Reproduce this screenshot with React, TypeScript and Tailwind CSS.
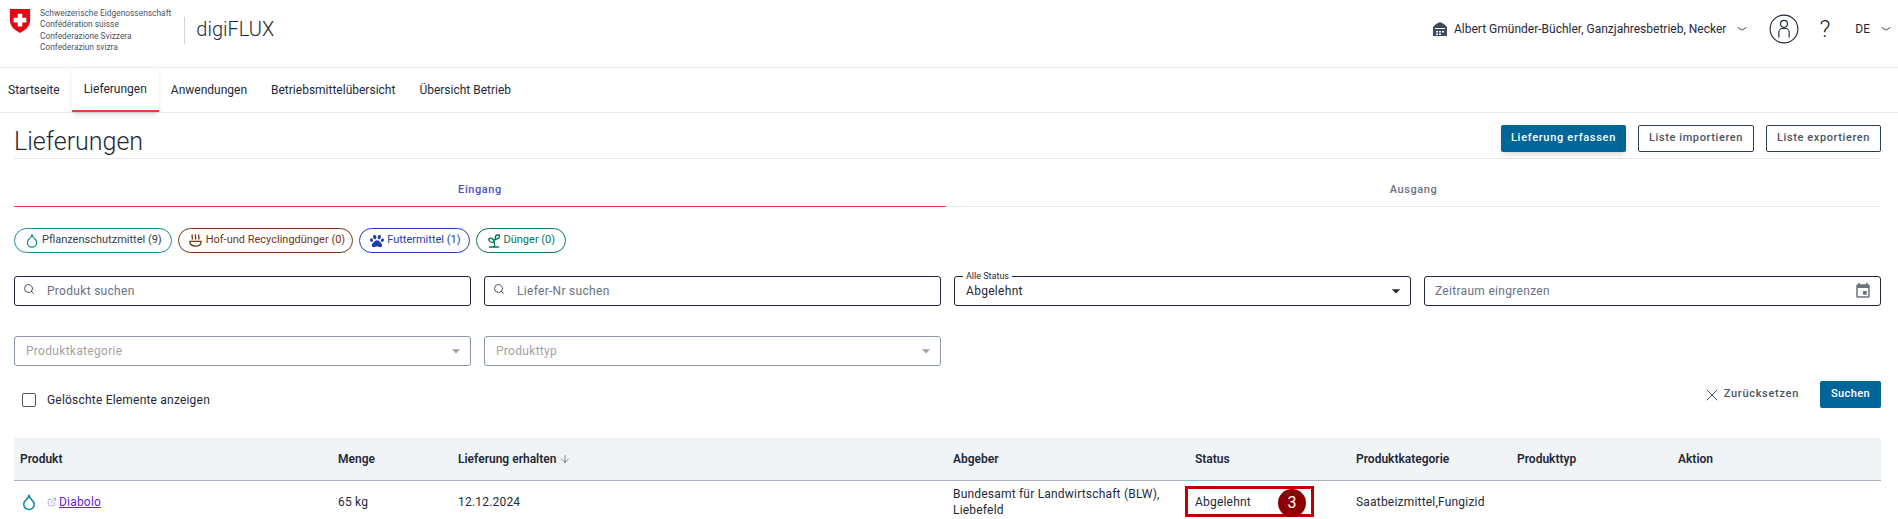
/**
 * digiFLUX deliveries page.
 */
import React from 'react';
import { Droplet, Search, Sprout, X, ArrowDown, ExternalLink } from 'lucide-react';
import { FaPaw } from 'react-icons/fa';
import { MdArrowDropDown, MdEvent } from 'react-icons/md';

const navItems = ['Startseite', 'Lieferungen', 'Anwendungen', 'Betriebsmittelübersicht', 'Übersicht Betrieb'];

const SwissShield = () => (
  <svg viewBox="0 0 24 28" className="mt-[3px] h-[26px] w-[22px] shrink-0">
    <path d="M1 1h22v12c0 7-5 11-11 14C6 24 1 20 1 13z" fill="#e30613" />
    <path d="M9.500 6h5v4.500H19v5h-4.500V20h-5v-4.500H5v-5h4.500z" fill="#fff" />
  </svg>
);

const FarmIcon = () => (
  <svg viewBox="0 0 16 16" className="h-4 w-4 text-[#3d4b5c]" fill="currentColor">
    <path d="M1 6l3-3 4-2 4 2 3 3v9H1z" />
    <path d="M3 7h10v1H3zM4 10h2v1.500H4zM7 10h2v1.500H7zM10 10h2v1.500h-2zM4 12.500h2V14H4zM7 12.500h2V14H7z" fill="#fff" />
  </svg>
);

const UserCircle = () => (
  <svg viewBox="0 0 32 32" className="h-[30px] w-[30px] text-[#1f2937]" fill="none" stroke="currentColor" strokeWidth="1.2">
    <circle cx="16" cy="16" r="14.800" />
    <circle cx="16" cy="10.500" r="3.700" />
    <path d="M10.500 25v-5.500a4 4 0 0 1 4-4h3a4 4 0 0 1 4 4V25" />
  </svg>
);

const FlatChevron = ({ className }: { className: string }) => (
  <svg viewBox="0 0 12 6" className={`h-[6px] w-[12px] text-[#4b5563] ${className}`} fill="none" stroke="currentColor" strokeWidth="1">
    <path d="M1.500 1.500L6 4l4.500-2.500" />
  </svg>
);

const ManureIcon = () => (
  <svg viewBox="0 0 16 16" className="h-[15px] w-[15px]" fill="none" stroke="currentColor" strokeWidth="1.4" strokeLinecap="round">
    <path d="M4.500 2c-1 1.500 1 2.500 0 4.500M8 2c-1 1.500 1 2.500 0 4.500M11.500 2c-1 1.500 1 2.500 0 4.500" />
    <path d="M2 9h12c0 3-2 5-6 5s-6-2-6-5z" />
  </svg>
);

const chips = [
  { label: 'Pflanzenschutzmittel (9)', icon: <Droplet className="-my-px h-[17px] w-[16px] text-[#0f8a94]" strokeWidth={1.8} />, cls: 'border-[#1b8f99] pr-[9px] text-[#2f3e50]' },
  { label: 'Hof-und Recyclingdünger (0)', icon: <span className="flex w-[16px] justify-center"><ManureIcon /></span>, cls: 'border-[#78350f] pr-[7px] text-[#78350f]' },
  { label: 'Futtermittel (1)', icon: <span className="flex w-[16px] justify-center"><FaPaw className="h-[14px] w-[14px]" /></span>, cls: 'border-[#1e40af] pr-[8px] text-[#1e40af]' },
  { label: 'Dünger (0)', icon: <Sprout className="h-4 w-4" strokeWidth={2} />, cls: 'border-[#047857] pr-[10px] text-[#047857]' },
];

const columns = ['Produkt', 'Menge', 'Lieferung erhalten', 'Abgeber', 'Status', 'Produktkategorie', 'Produkttyp', 'Aktion'];

const SearchField = ({ placeholder }: { placeholder: string }) => (
  <div className="flex h-[30px] items-center rounded-[3px] border border-[#1f2937] pl-[8px]">
    <Search className="-mt-[4px] h-3 w-3 text-[#4b5563]" strokeWidth={2} />
    <span className="ml-[12px] text-[12px] tracking-[0.3px] text-[#6b7280]">{placeholder}</span>
  </div>
);

const DisabledSelect = ({ placeholder }: { placeholder: string }) => (
  <div className="flex h-[30px] items-center justify-between rounded-[3px] border border-[#8d99a8] pl-[11px] pr-[4px]">
    <span className="text-[12px] tracking-[0.3px] text-[#a3a3a3]">{placeholder}</span>
    <MdArrowDropDown className="h-5 w-5 text-[#a3a3a3]" />
  </div>
);

export default function App() {
  return (
    <div className="h-[519px] overflow-hidden bg-white font-['Roboto',sans-serif] text-[12px] text-[#1f2937]">
      <header className="flex h-[68px] items-center justify-between border-b border-[#e2e8f0] pb-[9px] pl-[9px] pr-[6px]">
        <div className="flex items-center">
          <div className="flex gap-[9px]">
            <SwissShield />
            <div className="mt-[3px] text-[8.4px] leading-[11.3px] text-[#4b5563]">
              <div>Schweizerische Eidgenossenschaft</div>
              <div>Confédération suisse</div>
              <div>Confederazione Svizzera</div>
              <div>Confederaziun svizra</div>
            </div>
          </div>
          <div className="ml-[13px] mt-[3px] h-[27px] w-px bg-[#d1d5db]" />
          <span className="ml-[11px] text-[20px] font-light text-[#1f2937]">digiFLUX</span>
        </div>
        <div className="flex items-center">
          <FarmIcon />
          <span className="ml-[6px] text-[12px]">Albert Gmünder-Büchler, Ganzjahresbetrieb, Necker</span>
          <FlatChevron className="ml-[10px]" />
          <div className="ml-[21px]">
            <UserCircle />
          </div>
          <span className="ml-[20px] text-[24px] font-light leading-none">?</span>
          <span className="ml-[25px] text-[12px]">DE</span>
          <FlatChevron className="ml-[10px]" />
        </div>
      </header>

      <nav className="flex h-[45px] items-stretch border-b border-[#e2e8f0]">
        {navItems.map((item) => (
          <div
            key={item}
            className={
              item === 'Lieferungen'
                ? 'flex items-center border-b-2 border-[#e53e3e] px-[12px] shadow-md'
                : 'flex items-center px-[12px] pb-[1px] first:pl-[8px]'
            }
          >
            {item}
          </div>
        ))}
      </nav>

      <main className="px-[14px] pr-[17px]">
        <div className="flex h-[46px] items-start justify-between border-b border-[#e2e8f0] pt-[12px]">
          <h1 className="mt-[4px] text-[25px] font-light leading-[25px]">Lieferungen</h1>
          <div className="flex gap-[12px]">
            <button className="h-[27px] w-[125px] rounded-[2px] bg-[#006699] text-[11px] font-medium tracking-[0.7px] text-white shadow-md">Lieferung erfassen</button>
            <button className="h-[27px] w-[116px] rounded-[2px] border border-[#2f3e50] text-[11px] font-medium tracking-[0.6px] text-[#4b5563]">Liste importieren</button>
            <button className="h-[27px] w-[115px] rounded-[2px] border border-[#2f3e50] text-[11px] font-medium tracking-[0.6px] text-[#4b5563]">Liste exportieren</button>
          </div>
        </div>

        <div className="grid h-[48px] grid-cols-[932px_1fr] text-[11px] font-medium tracking-[0.6px]">
          <div className="flex items-center justify-center border-b border-[#e53e3e] pt-[16px] text-[#4c51bf]">Eingang</div>
          <div className="flex items-center justify-center border-b border-[#e2e8f0] pt-[16px] text-[#6b7280]">Ausgang</div>
        </div>

        <div className="mt-[21px] flex gap-[6px]">
          {chips.map((c) => (
            <div key={c.label} className={`flex h-[25px] items-center gap-[2px] rounded-full border pl-[9px] text-[11px] ${c.cls}`}>
              {c.icon}
              {c.label}
            </div>
          ))}
        </div>

        <div className="mt-[23px] grid grid-cols-4 gap-x-[13px] gap-y-[30px]">
          <SearchField placeholder="Produkt suchen" />
          <SearchField placeholder="Liefer-Nr suchen" />
          <div className="relative flex h-[30px] items-center justify-between rounded-[3px] border border-[#1f2937] pl-[11px] pr-[4px]">
            <span className="absolute -top-[6px] left-[8px] bg-white px-[3px] text-[9px] leading-[10px]">Alle Status</span>
            <span className="text-[12px] tracking-[0.3px]">Abgelehnt</span>
            <MdArrowDropDown className="h-5 w-5 text-[#1f2937]" />
          </div>
          <div className="flex h-[30px] items-center justify-between rounded-[3px] border border-[#1f2937] pl-[10px] pr-[8px]">
            <span className="text-[12px] tracking-[0.3px] text-[#6b7280]">Zeitraum eingrenzen</span>
            <MdEvent className="h-[18px] w-[18px] text-[#6b7280]" />
          </div>
          <DisabledSelect placeholder="Produktkategorie" />
          <DisabledSelect placeholder="Produkttyp" />
        </div>

        <div className="mt-[15px] flex h-[27px] items-start justify-between">
          <label className="mt-[10px] flex items-center pl-[8px]">
            <span className="h-[14px] w-[14px] rounded-[2px] border border-[#4b5563]" />
            <span className="ml-[11px] text-[12px] tracking-[0.2px]">Gelöschte Elemente anzeigen</span>
          </label>
          <div className="flex items-center">
            <X className="h-[20px] w-[20px] text-[#4b5563]" strokeWidth={1.2} />
            <span className="ml-[2px] text-[11px] font-medium tracking-[0.7px] text-[#4b5563]">Zurücksetzen</span>
            <button className="ml-[21px] h-[27px] w-[61px] rounded-[2px] bg-[#006699] text-[11px] font-medium tracking-[0.4px] text-white">Suchen</button>
          </div>
        </div>

        <table className="mt-[30px] w-full table-fixed text-left">
          <colgroup>
            <col className="w-[318px]" />
            <col className="w-[120px]" />
            <col className="w-[495px]" />
            <col className="w-[242px]" />
            <col className="w-[161px]" />
            <col className="w-[161px]" />
            <col className="w-[161px]" />
            <col />
          </colgroup>
          <thead>
            <tr className="h-[42px] border-b border-[#a8b3c2] bg-[#f1f4f7]">
              {columns.map((c) => (
                <th key={c} className="pl-[6px] text-[12px] font-semibold">
                  {c === 'Lieferung erhalten' ? (
                    <span className="flex items-center gap-[3px]">
                      {c}
                      <ArrowDown className="h-3 w-3 text-[#374151]" strokeWidth={1.25} />
                    </span>
                  ) : (
                    c
                  )}
                </th>
              ))}
            </tr>
          </thead>
          <tbody className="tracking-[0.2px]">
            <tr className="h-[43px]">
              <td className="pl-[6px]">
                <span className="flex items-center">
                  <Droplet className="h-[18px] w-[18px] text-[#0f8a94]" strokeWidth={2} />
                  <ExternalLink className="ml-[9px] h-[10px] w-[10px] text-[#7f8fd6]" strokeWidth={1.5} />
                  <a className="ml-[2px] text-[#6b21d8] underline">Diabolo</a>
                </span>
              </td>
              <td className="pl-[6px]">65 kg</td>
              <td className="pl-[6px]">12.12.2024</td>
              <td className="pl-[6px] leading-[16px]">Bundesamt für Landwirtschaft (BLW), Liebefeld</td>
              <td className="relative pl-[6px]">
                Abgelehnt
                <div className="absolute left-[-4px] top-[5px] h-[31px] w-[129px] border-[3px] border-[#c00000]" />
                <div className="absolute left-[89px] top-[8px] flex h-[28px] w-[28px] items-center justify-center rounded-full bg-[#8b0000] text-[16px] text-white">3</div>
              </td>
              <td className="pl-[6px]">Saatbeizmittel,Fungizid</td>
              <td />
              <td />
            </tr>
          </tbody>
        </table>
      </main>
    </div>
  );
}
